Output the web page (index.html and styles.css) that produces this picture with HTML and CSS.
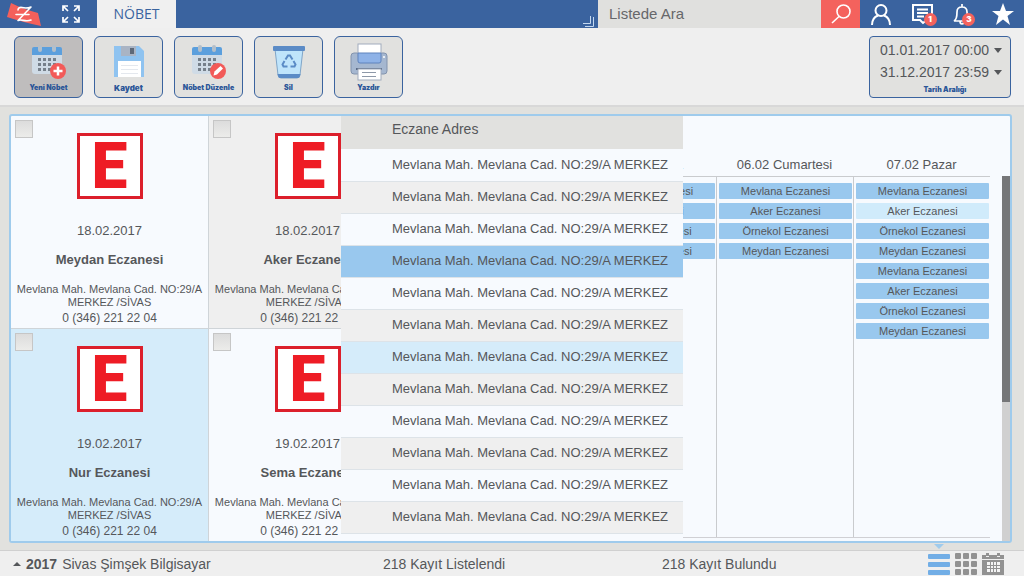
FILE: index.html
```html
<!DOCTYPE html>
<html lang="tr">
<head>
<meta charset="utf-8">
<title>Nöbet</title>
<link rel="stylesheet" href="styles.css">
</head>
<body>
<svg class="defs" aria-hidden="true">
  <symbol id="calendar" viewBox="0 0 32 32">
    <path d="M1 7h30v19a3 3 0 0 1-3 3H4a3 3 0 0 1-3-3z" fill="#cfdbe6"/>
    <path d="M1 4a2 2 0 0 1 2-2h26a2 2 0 0 1 2 2v6H1z" fill="#5b9fdd"/>
    <rect x="7" y="0" width="4" height="7" rx="2" fill="#b3bfca"/>
    <rect x="21" y="0" width="4" height="7" rx="2" fill="#b3bfca"/>
    <path d="M7 14.500h18M7 19.500h18M7 24.500h18" stroke="#76808b" stroke-width="3" stroke-dasharray="3 2"/>
  </symbol>
</svg>

<header class="topbar">
  <a class="brand" href="#" aria-label="Ana sayfa">
    <svg width="48" height="28" viewBox="0 0 48 28">
      <path d="M11 3Q23 9 38 13L41 26Q22 22 7 17z" fill="#f4605b"/>
      <path d="M18 10c0-2 2-3 4-2.500s5 1 9-.5L18 20.500c4-2 7 2 13-.5M16 14.500h13" fill="none" stroke="#fff" stroke-width="1.600" stroke-linecap="round" stroke-linejoin="round"/>
    </svg>
  </a>
  <button class="icon-button expand" aria-label="Tam ekran">
    <svg width="18" height="18" viewBox="0 0 18 18" fill="none" stroke="#fff" stroke-width="1.700">
      <path d="M1 6V1h5M1 1l5 5M12 1h5v5M17 1l-5 5M1 12v5h5M1 17l5-5M12 17h5v-5M17 17l-5-5"/>
    </svg>
  </button>
  <a class="tab" href="#">NÖBET</a>
  <svg class="corner" width="12" height="12" viewBox="0 0 12 12" fill="none" stroke="#c3d8f0">
    <path d="M7.500 0v7.500H0M10.500 1v9.500H2"/>
  </svg>
  <form class="search">
    <input type="search" placeholder="Listede Ara" aria-label="Listede Ara">
    <button type="button" aria-label="Ara">
      <svg width="20" height="20" viewBox="0 0 20 20" fill="none" stroke="#fff" stroke-width="1.600">
        <circle cx="12.500" cy="7.500" r="6.500"/><path d="M8 12.500L1 19"/>
      </svg>
    </button>
  </form>
  <nav class="account">
    <button class="icon-button" aria-label="Profil">
      <svg width="20" height="21" viewBox="0 0 20 21" fill="none" stroke="#fff" stroke-width="2">
        <circle cx="10" cy="6.500" r="5.500"/><path d="M1 21c0-5 2-8 6-9.500M19 21c0-5-2-8-6-9.500"/>
      </svg>
    </button>
    <button class="icon-button" aria-label="Mesajlar">
      <svg width="21" height="21" viewBox="0 0 21 21" fill="none" stroke="#fff" stroke-width="2">
        <path d="M1 1h19v15h-5l-4 3-3-3H1zM5 5.500h11M5 9h11M5 12.500h7"/>
      </svg>
      <span class="badge">1</span>
    </button>
    <button class="icon-button" aria-label="Bildirimler">
      <svg width="18" height="21" viewBox="0 0 18 21" fill="none" stroke="#fff" stroke-width="1.700">
        <path d="M1 17h16c-2-1-3-3-3-9 0-3-2-5-5-5S4 5 4 8c0 6-1 8-3 9zM9 0v3M7 17c0 4 4 4 4 0"/>
      </svg>
      <span class="badge">3</span>
    </button>
    <button class="icon-button" aria-label="Sık kullanılanlar">
      <svg width="22" height="22" viewBox="0 0 22 22" fill="#fff">
        <path d="M11 0l3 8h8l-6.500 5 2.500 9-7-5.500L4 22l2.500-9L0 8h8z"/>
      </svg>
    </button>
  </nav>
</header>

<section class="toolbar">
  <button class="tool active">
    <svg width="36" height="36" viewBox="0 0 36 36">
      <use href="#calendar" y="2" width="32" height="32"/>
      <circle cx="27" cy="28" r="8" fill="#f25a58"/>
      <path d="M27 23.500v9M22.500 28h9" stroke="#fff" stroke-width="2.500"/>
    </svg>
    <span>Yeni Nöbet</span>
  </button>
  <button class="tool">
    <svg width="32" height="36" viewBox="0 0 32 36">
      <path d="M1 3h25l5 5v26H1z" fill="#8fc3f0"/>
      <rect x="8" y="3" width="15" height="10" fill="#a9b4c4"/>
      <rect x="17" y="5" width="4" height="6" fill="#5d6878"/>
      <rect x="5" y="18" width="23" height="16" fill="#fff"/>
      <path d="M8 22.500h17M8 26.500h17M8 30.500h17" stroke="#e4e8ee"/>
    </svg>
    <span class="large">Kaydet</span>
  </button>
  <button class="tool">
    <svg width="36" height="36" viewBox="0 0 36 36">
      <use href="#calendar" y="2" width="32" height="32"/>
      <circle cx="27" cy="28" r="8" fill="#f25a58"/>
      <path d="M22.500 32.500l1-4 6-5.500 2.500 2.500-6 6z" fill="#fff"/>
    </svg>
    <span>Nöbet Düzenle</span>
  </button>
  <button class="tool">
    <svg width="32" height="36" viewBox="0 0 32 36">
      <path d="M2 6h28l-3 26a3 3 0 0 1-3 3H8a3 3 0 0 1-3-3z" fill="#bfe4fb" stroke="#7fa5c8"/>
      <path d="M4.500 31h23l-1 3a2 2 0 0 1-2 1h-17a2 2 0 0 1-2-1z" fill="#5b8bc6"/>
      <rect x="0" y="3" width="32" height="5" rx="1" fill="#5b8bc6"/>
      <path d="M12.500 16.500l2.500-4h2l2.500 4M20.500 18l2 3.500-1 2h-4M14.500 23.500h-4l-1-2 2-3.500" fill="none" stroke="#5b8bc6" stroke-width="2"/>
    </svg>
    <span>Sil</span>
  </button>
  <button class="tool">
    <svg width="38" height="38" viewBox="0 0 38 38">
      <rect x="1" y="10" width="36" height="21" rx="3" fill="#a5b7d0" stroke="#8293ad"/>
      <rect x="8" y="1" width="23" height="12" fill="#fff" stroke="#a1acbd"/>
      <path d="M8 10h23v8a2 2 0 0 1-2 2H10a2 2 0 0 1-2-2z" fill="#8eb2e7" stroke="#5e83bd"/>
      <path d="M6 26h26" stroke="#596a86" stroke-width="2"/>
      <rect x="8" y="26" width="23" height="11" fill="#fff" stroke="#a1acbd"/>
      <path d="M12 29.500h14M12 33.500h14" stroke="#8d98a8"/>
      <circle cx="34" cy="14" r="1" fill="#fff"/>
    </svg>
    <span>Yazdır</span>
  </button>

  <div class="range">
    <label class="pick">
      <select aria-label="Başlangıç"><option>01.01.2017 00:00</option></select>
      <svg width="8" height="5" viewBox="0 0 8 5"><path d="M0 0h8L4 5z" fill="#55575a"/></svg>
    </label>
    <label class="pick">
      <select aria-label="Bitiş"><option>31.12.2017 23:59</option></select>
      <svg width="8" height="5" viewBox="0 0 8 5"><path d="M0 0h8L4 5z" fill="#55575a"/></svg>
    </label>
    <span class="range-title">Tarih Aralığı</span>
  </div>
</section>

<main class="content">
  <div class="frame">
    <section class="cards">
      <article class="card">
        <input type="checkbox" aria-label="Meydan Eczanesi">
        <div class="sign">E</div>
        <time>18.02.2017</time>
        <h2>Meydan Eczanesi</h2>
        <address>Mevlana Mah. Mevlana Cad. NO:29/A<br>MERKEZ /SİVAS</address>
        <p>0 (346) 221 22 04</p>
      </article>
      <article class="card muted">
        <input type="checkbox" aria-label="Aker Eczanesi">
        <div class="sign">E</div>
        <time>18.02.2017</time>
        <h2>Aker Eczanesi</h2>
        <address>Mevlana Mah. Mevlana Cad. NO:29/A<br>MERKEZ /SİVAS</address>
        <p>0 (346) 221 22 04</p>
      </article>
      <article class="card selected">
        <input type="checkbox" aria-label="Nur Eczanesi">
        <div class="sign">E</div>
        <time>19.02.2017</time>
        <h2>Nur Eczanesi</h2>
        <address>Mevlana Mah. Mevlana Cad. NO:29/A<br>MERKEZ /SİVAS</address>
        <p>0 (346) 221 22 04</p>
      </article>
      <article class="card">
        <input type="checkbox" aria-label="Sema Eczanesi">
        <div class="sign">E</div>
        <time>19.02.2017</time>
        <h2>Sema Eczanesi</h2>
        <address>Mevlana Mah. Mevlana Cad. NO:29/A<br>MERKEZ /SİVAS</address>
        <p>0 (346) 221 22 04</p>
      </article>
    </section>

    <section class="list">
      <table>
        <thead><tr><th scope="col">Eczane Adres</th></tr></thead>
        <tbody>
          <tr><td>Mevlana Mah. Mevlana Cad. NO:29/A MERKEZ</td></tr>
          <tr><td>Mevlana Mah. Mevlana Cad. NO:29/A MERKEZ</td></tr>
          <tr><td>Mevlana Mah. Mevlana Cad. NO:29/A MERKEZ</td></tr>
          <tr class="current"><td>Mevlana Mah. Mevlana Cad. NO:29/A MERKEZ</td></tr>
          <tr><td>Mevlana Mah. Mevlana Cad. NO:29/A MERKEZ</td></tr>
          <tr><td>Mevlana Mah. Mevlana Cad. NO:29/A MERKEZ</td></tr>
          <tr class="hover"><td>Mevlana Mah. Mevlana Cad. NO:29/A MERKEZ</td></tr>
          <tr><td>Mevlana Mah. Mevlana Cad. NO:29/A MERKEZ</td></tr>
          <tr><td>Mevlana Mah. Mevlana Cad. NO:29/A MERKEZ</td></tr>
          <tr><td>Mevlana Mah. Mevlana Cad. NO:29/A MERKEZ</td></tr>
          <tr><td>Mevlana Mah. Mevlana Cad. NO:29/A MERKEZ</td></tr>
          <tr><td>Mevlana Mah. Mevlana Cad. NO:29/A MERKEZ</td></tr>
        </tbody>
      </table>
    </section>

    <section class="calendar">
      <div class="days">
        <div class="day">
          <h3>05.02 Cuma</h3>
          <ul>
            <li>Mevlana Eczanesi</li><li>Aker Eczanesi</li><li>Örnekol Eczanesi</li><li>Meydan Eczanesi</li>
          </ul>
        </div>
        <div class="day">
          <h3>06.02 Cumartesi</h3>
          <ul>
            <li>Mevlana Eczanesi</li><li>Aker Eczanesi</li><li>Örnekol Eczanesi</li><li>Meydan Eczanesi</li>
          </ul>
        </div>
        <div class="day">
          <h3>07.02 Pazar</h3>
          <ul>
            <li>Mevlana Eczanesi</li><li class="light">Aker Eczanesi</li><li>Örnekol Eczanesi</li><li>Meydan Eczanesi</li>
            <li>Mevlana Eczanesi</li><li>Aker Eczanesi</li><li>Örnekol Eczanesi</li><li>Meydan Eczanesi</li>
          </ul>
        </div>
      </div>
      <div class="scrollbar"><div class="thumb"></div></div>
    </section>
  </div>
</main>

<footer class="status">
  <div class="company">
    <svg width="8" height="4" viewBox="0 0 8 4"><path d="M0 4h8L4 0z" fill="#55575a"/></svg>
    <b>2017</b> <span>Sivas Şimşek Bilgisayar</span>
  </div>
  <span>218 Kayıt Listelendi</span>
  <span>218 Kayıt Bulundu</span>
  <nav class="views">
    <button class="view on" aria-label="Liste">
      <svg width="22" height="22" viewBox="0 0 22 22" fill="#72aee6">
        <rect y="1" width="22" height="5" rx="1"/><rect y="9" width="22" height="5" rx="1"/><rect y="17" width="22" height="5" rx="1"/>
      </svg>
    </button>
    <button class="view" aria-label="Kartlar">
      <svg width="22" height="22" viewBox="0 0 22 22" fill="#929292">
        <rect width="6" height="6" rx="1"/><rect x="8" width="6" height="6" rx="1"/><rect x="16" width="6" height="6" rx="1"/>
        <rect y="8" width="6" height="6" rx="1"/><rect x="8" y="8" width="6" height="6" rx="1"/><rect x="16" y="8" width="6" height="6" rx="1"/>
        <rect y="16" width="6" height="6" rx="1"/><rect x="8" y="16" width="6" height="6" rx="1"/><rect x="16" y="16" width="6" height="6" rx="1"/>
      </svg>
    </button>
    <button class="view" aria-label="Takvim">
      <svg width="22" height="22" viewBox="0 0 22 22">
        <path d="M0 2h4v2h3V2h8v2h3V2h4v4H0zM0 7h22v15H0zM4 0h3v3H4zM15 0h3v3h-3z" fill="#929292"/>
        <path d="M5 9h13v10H5z" fill="#f4f4f4"/>
        <path d="M5 12.500h13M5 15.500h13M8.500 9v10M11.500 9v10M14.500 9v10" stroke="#929292"/>
      </svg>
    </button>
  </nav>
</footer>
</body>
</html>
```

FILE: styles.css
```css
* { box-sizing: border-box; }

body {
  margin: 0;
  min-height: 100vh;
  display: flex;
  flex-direction: column;
  background: #e1e1de;
  color: #55575a;
  font: 13px/16px "Liberation Sans", Arial, sans-serif;
}

button, input, select { font: inherit; color: inherit; }
button { padding: 0; border: 0; background: none; cursor: pointer; }
svg { display: block; flex: none; }
.defs { position: absolute; width: 0; height: 0; }

/* Top bar */
.topbar {
  display: flex;
  height: 28px;
  background: #3a639f;
}
.brand { width: 61px; }
.icon-button {
  position: relative;
  display: flex;
  align-items: center;
  justify-content: center;
}
.expand { width: 19px; margin-right: 17px; }
.tab {
  width: 79px;
  background: #f0f0f0;
  color: #3a639f;
  font: 14px/28px "Open Sans", "Noto Sans", sans-serif;
  text-align: center;
  text-decoration: none;
}
.corner { margin: auto 3px 0 auto; }
.search { display: flex; width: 262px; }
.search input {
  flex: 1;
  min-width: 0;
  padding: 0 11px;
  border: 0;
  background: #e0e0de;
  font-size: 15px;
}
.search input::placeholder { color: #66676a; opacity: 1; }
.search button {
  display: flex;
  align-items: center;
  justify-content: center;
  width: 39px;
  background: #f4625d;
}
.account {
  display: flex;
  justify-content: space-between;
  width: 164px;
  padding: 0 10px 0 11px;
}
.badge {
  position: absolute;
  right: -4px;
  bottom: 2px;
  width: 13px;
  border-radius: 7px;
  background: #f4625d;
  color: #fff;
  font: 900 8px/13px Inter, sans-serif;
  text-align: center;
}

/* Toolbar */
.toolbar {
  display: flex;
  gap: 11px;
  padding: 8px 13px 7px 14px;
  border-bottom: 2px solid #d8d8d8;
  background: #efefef;
}
.tool {
  display: flex;
  flex-direction: column;
  align-items: center;
  justify-content: space-between;
  width: 69px;
  height: 62px;
  padding: 6px 0 4px;
  border: 1px solid #3a639f;
  border-radius: 6px;
  background: #e1e1df;
  color: #2b5698;
  font: 900 7px/10px Inter, sans-serif;
  white-space: nowrap;
}
.tool.active { background: #bfbdbd; }
.tool .large { font-size: 8px; }
.range {
  width: 142px;
  margin-left: auto;
  padding: 2px 8px 0 10px;
  border: 1px solid #3a639f;
  border-radius: 4px;
  background: #e1e1df;
  text-align: center;
}
.pick { display: flex; align-items: center; justify-content: space-between; }
.pick select {
  height: 22px;
  padding: 0;
  border: 0;
  background: none;
  appearance: none;
  font-size: 14px;
}
.range-title {
  display: block;
  padding-left: 8px;
  color: #2b5698;
  font: 900 7px/14px Inter, sans-serif;
}

/* Main frame */
.content { flex: 1; display: flex; padding: 7px 12px 7px 9px; }
.frame {
  flex: 1;
  display: grid;
  grid-template-columns: minmax(0, 330fr) minmax(0, 342fr) minmax(0, 327fr);
  border: 2px solid #9fcbec;
  border-radius: 3px;
  background: #f7fafe;
}

/* Pharmacy cards */
.cards {
  display: grid;
  grid-template-columns: 198px 198px;
  grid-template-rows: 1fr 1fr;
  overflow: hidden;
}
.card {
  position: relative;
  display: flex;
  flex-direction: column;
  align-items: center;
  padding-top: 17px;
  border-right: 1px solid #cfd4d8;
  border-bottom: 1px solid #cfd4d8;
  white-space: nowrap;
  text-align: center;
}
.card:nth-child(n+3) { border-bottom: 0; }
.card.muted { background: #efefef; }
.card.selected { background: #d5ecfa; }
.card input {
  position: absolute;
  top: 4px;
  left: 4px;
  width: 18px;
  height: 18px;
  margin: 0;
  border: 1px solid #c6c6c6;
  background: linear-gradient(#dcdcdc, #ececea);
  appearance: none;
}
.sign {
  width: 66px;
  height: 66px;
  border: 3px solid #dc1f2b;
  background: #fff;
  color: #ee1c25;
  font: 900 64px/62px Roboto, sans-serif;
}
.card time { margin-top: 24px; }
.card h2 { margin: 13px 0; font-size: 13px; line-height: 16px; }
.card address { margin-top: 2px; font-size: 11px; line-height: 13px; font-style: normal; }
.card p { margin: 2px 0 0; font-size: 12px; line-height: 14px; }

/* Address list */
.list { overflow: hidden; background: #f7fafe; }
.list table { width: 100%; border-collapse: collapse; }
.list th, .list td {
  padding: 0 0 0 51px;
  font-weight: 400;
  text-align: left;
  white-space: nowrap;
}
.list th {
  height: 33px;
  padding-bottom: 8px;
  background: #e1e1df;
  font-size: 14px;
}
.list td { height: 32px; }
.list tbody tr { border-bottom: 1px solid #dde3e8; }
.list tbody tr:nth-child(even) { background: #efefef; }
.list tbody tr.current { background: #99c8ee; }
.list tbody tr.hover { background: #d5ecfa; }

/* Duty calendar */
.calendar { display: flex; gap: 12px; }
.days {
  flex: 1;
  display: flex;
  justify-content: flex-end;
  margin-bottom: 3px;
  border-bottom: 1px solid #d0d0d4;
  overflow: hidden;
}
.day { flex: none; display: flex; flex-direction: column; width: 137px; }
.day h3 {
  margin: 0;
  padding: 41px 0 3px;
  border-bottom: 1px solid #c9cbce;
  font-size: 13px;
  font-weight: 400;
  text-align: center;
}
.day ul {
  flex: 1;
  display: flex;
  flex-direction: column;
  gap: 4px;
  margin: 0;
  padding: 6px 1px 0 2px;
  border-left: 1px solid #c9cbce;
  list-style: none;
}
.day li {
  border-radius: 1px;
  background: #99c8ee;
  font-size: 11px;
  line-height: 16px;
  text-align: center;
}
.day .light { background: #d0ebfb; }
.scrollbar { width: 8px; margin-top: 60px; background: #d0d0d0; }
.thumb { height: 62%; background: #757678; }

/* Status bar */
.status {
  display: grid;
  grid-template-columns: 370fr 279fr 266fr auto;
  align-items: center;
  height: 26px;
  padding: 0 20px 0 13px;
  border-top: 1px solid #d0d0d0;
  background: #efefef;
  font-size: 14px;
}
.company { display: flex; align-items: center; gap: 5px; }
.views { display: flex; gap: 5px; }
.view { position: relative; }
.view.on::before {
  content: "";
  position: absolute;
  top: -9px;
  left: 6px;
  border: 5px solid transparent;
  border-top-color: #9fcbec;
  border-bottom: 0;
}
```
